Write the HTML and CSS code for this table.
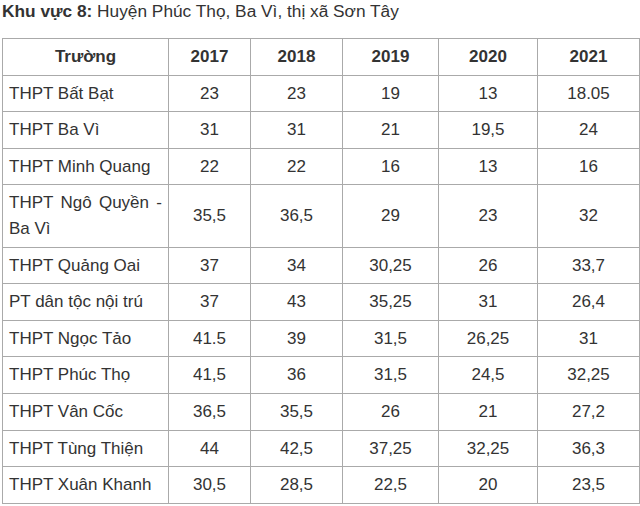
FILE: index.html
```html
<!DOCTYPE html>
<html lang="vi">
<head>
<meta charset="utf-8">
<title>Khu vực 8</title>
<link rel="stylesheet" href="styles.css">
</head>
<body>
<p class="heading"><strong>Khu vực 8:</strong> Huyện Phúc Thọ, Ba Vì, thị xã Sơn Tây</p>
<table class="scores">
  <thead>
    <tr><th>Trường</th><th>2017</th><th>2018</th><th>2019</th><th>2020</th><th>2021</th></tr>
  </thead>
  <tbody>
    <tr><td>THPT Bất Bạt</td><td>23</td><td>23</td><td>19</td><td>13</td><td>18.05</td></tr>
    <tr><td>THPT Ba Vì</td><td>31</td><td>31</td><td>21</td><td>19,5</td><td>24</td></tr>
    <tr><td>THPT Minh Quang</td><td>22</td><td>22</td><td>16</td><td>13</td><td>16</td></tr>
    <tr><td>THPT Ngô Quyền - Ba Vì</td><td>35,5</td><td>36,5</td><td>29</td><td>23</td><td>32</td></tr>
    <tr><td>THPT Quảng Oai</td><td>37</td><td>34</td><td>30,25</td><td>26</td><td>33,7</td></tr>
    <tr><td>PT dân tộc nội trú</td><td>37</td><td>43</td><td>35,25</td><td>31</td><td>26,4</td></tr>
    <tr><td>THPT Ngọc Tảo</td><td>41.5</td><td>39</td><td>31,5</td><td>26,25</td><td>31</td></tr>
    <tr><td>THPT Phúc Thọ</td><td>41,5</td><td>36</td><td>31,5</td><td>24,5</td><td>32,25</td></tr>
    <tr><td>THPT Vân Cốc</td><td>36,5</td><td>35,5</td><td>26</td><td>21</td><td>27,2</td></tr>
    <tr><td>THPT Tùng Thiện</td><td>44</td><td>42,5</td><td>37,25</td><td>32,25</td><td>36,3</td></tr>
    <tr><td>THPT Xuân Khanh</td><td>30,5</td><td>28,5</td><td>22,5</td><td>20</td><td>23,5</td></tr>
  </tbody>
</table>
</body>
</html>
```
FILE: styles.css
```css
html, body {
  margin: 0;
  padding: 0;
  background: #ffffff;
}
body {
  font-family: "Liberation Sans", Arial, sans-serif;
  color: #333333;
}
.heading {
  margin: 0;
  padding: 1px 0 0 2px;
  font-size: 17.3px;
  line-height: 20px;
  height: 38px;
  box-sizing: border-box;
}
.heading strong {
  font-weight: bold;
}
.scores {
  margin-left: 2px;
  width: 637px;
  border-collapse: collapse;
  table-layout: fixed;
  font-size: 17px;
}
.scores th,
.scores td {
  box-sizing: border-box;
  border: 1px solid #aaaaaa;
  padding: 5px 6px;
  line-height: 25.6px;
  text-align: center;
  vertical-align: middle;
}
.scores th {
  font-weight: bold;
}
.scores td:first-child {
  text-align: justify;
}
.scores th:nth-child(1) { width: 166px; }
.scores th:nth-child(2) { width: 82px; }
.scores th:nth-child(3) { width: 92px; }
.scores th:nth-child(4) { width: 96px; }
.scores th:nth-child(5) { width: 99px; }
.scores th:nth-child(6) { width: 102px; }
```
